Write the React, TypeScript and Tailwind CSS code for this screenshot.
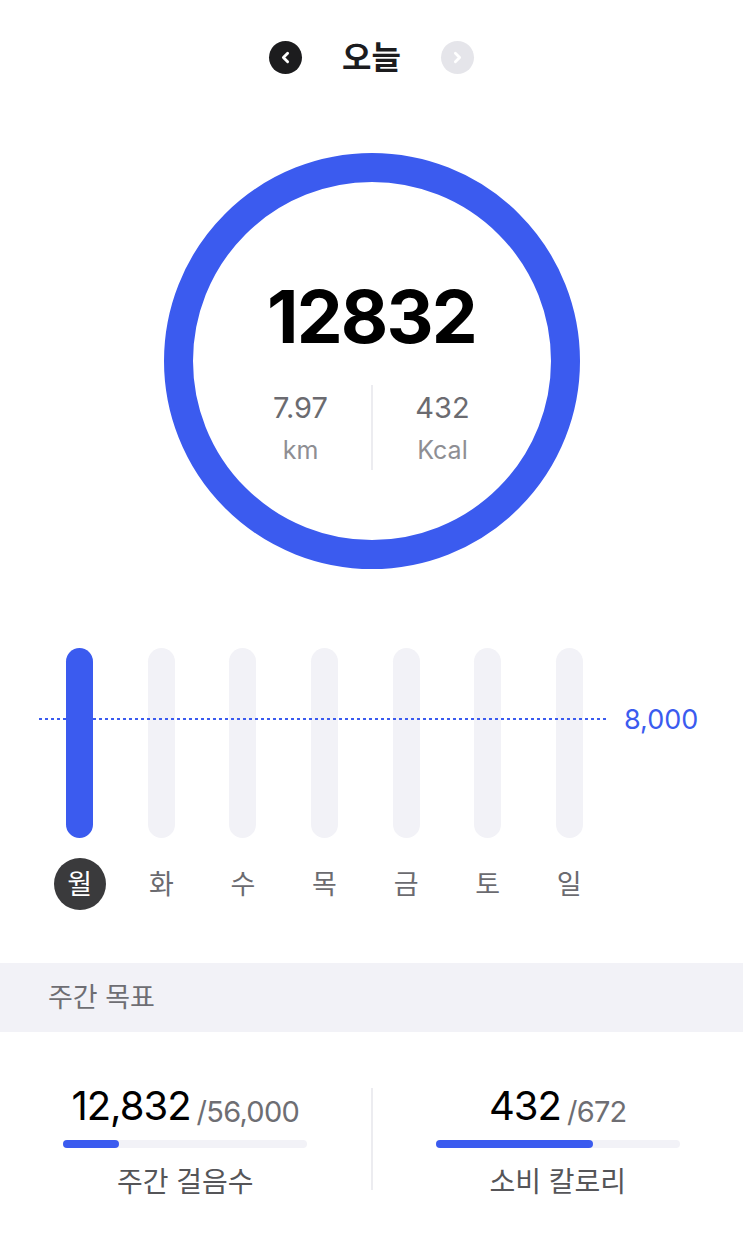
import { ChevronLeft, ChevronRight } from "lucide-react"

const BLUE = "#3b5bef"

const days = [
  { label: "월", value: 12832 },
  { label: "화", value: 0 },
  { label: "수", value: 0 },
  { label: "목", value: 0 },
  { label: "금", value: 0 },
  { label: "토", value: 0 },
  { label: "일", value: 0 },
]

function GoalItem({ value, total, label }: { value: number; total: number; label: string }) {
  const pct = Math.min(100, (value / total) * 100)
  return (
    <div className="flex flex-col items-center">
      <div className="flex items-end leading-none">
        <span className="text-[40px] leading-none text-black tracking-tight">{value.toLocaleString()}</span>
        <span className="ml-[6px] text-[29px] leading-none text-[#6e6e73] tracking-tight">/{total.toLocaleString()}</span>
      </div>
      <div className="mt-[14px] h-[8px] w-[244px] rounded-full bg-[#f2f2f7]">
        <div className="h-full rounded-full bg-[#3b5bef]" style={{ width: `${pct}%` }} />
      </div>
      <div className="mt-[20px] text-[28px] leading-none text-[#555558]">{label}</div>
    </div>
  )
}

export default function App() {
  return (
    <div
      className="flex w-[743px] flex-col bg-white"
      style={{ fontFamily: "Inter, 'Noto Sans CJK KR', sans-serif" }}
    >
      {/* 헤더 */}
      <div className="mt-[41px] flex h-[33px] items-center justify-center">
        <button className="flex h-[33px] w-[33px] items-center justify-center rounded-full bg-[#1c1c1e]">
          <ChevronLeft size={17} strokeWidth={4} color="#fff" />
        </button>
        <div className="mx-[40px] text-[32px] font-bold leading-none text-[#1c1c1e]">오늘</div>
        <button className="flex h-[33px] w-[33px] items-center justify-center rounded-full bg-[#e5e5ea]">
          <ChevronRight size={17} strokeWidth={4} color="#fff" />
        </button>
      </div>

      {/* 링 */}
      <div className="mt-[79px] flex justify-center">
        <div className="box-border flex h-[416px] w-[416px] flex-col items-center rounded-full border-[29px] border-[#3b5bef]">
          <div className="mt-[98px] text-[73px] font-bold leading-none tracking-tight text-black">12832</div>
          <div className="mt-[32px] flex h-[85px]">
            <div className="flex w-[140px] flex-col items-center">
              <div className="mt-[8px] text-[29px] leading-none text-[#6b6b70]">7.97</div>
              <div className="mt-[16px] text-[25px] leading-none text-[#8e8e93]">km</div>
            </div>
            <div className="w-[2px] bg-[#ececf0]" />
            <div className="flex w-[140px] flex-col items-center">
              <div className="mt-[8px] text-[29px] leading-none text-[#6b6b70]">432</div>
              <div className="mt-[16px] text-[25px] leading-none text-[#8e8e93]">Kcal</div>
            </div>
          </div>
        </div>
      </div>

      {/* 주간 차트 */}
      <div className="mt-[79px] flex pl-[39px]">
        <div className="relative w-[571px]">
          <div className="grid h-[190px] grid-cols-7">
            {days.map((d) => (
              <div key={d.label} className="flex justify-center">
                <div className={`relative h-full w-[27px] rounded-full ${d.value > 0 ? "z-10 bg-[#3b5bef]" : "bg-[#f2f2f7]"}`} />
              </div>
            ))}
          </div>
          <svg className="absolute left-0 top-[70px]" width="569" height="2">
            <line x1="0" y1="1" x2="569" y2="1" stroke={BLUE} strokeWidth="2" strokeDasharray="3 3" />
          </svg>
          <div className="mt-[20px] grid grid-cols-7">
            {days.map((d, i) => (
              <div key={d.label} className="flex justify-center">
                {i === 0 ? (
                  <div className="flex h-[52px] w-[52px] items-center justify-center rounded-full bg-[#3a3a3c] text-[27px] leading-none text-white">
                    {d.label}
                  </div>
                ) : (
                  <div className="flex h-[52px] items-center text-[27px] leading-none text-[#6b6b70]">{d.label}</div>
                )}
              </div>
            ))}
          </div>
        </div>
        <div className="ml-[14px] mt-[58px] text-[27px] leading-none text-[#3b5bef]">8,000</div>
      </div>

      {/* 주간 목표 */}
      <div className="mt-[53px] flex h-[69px] items-center bg-[#f2f2f7] pl-[48px]">
        <span className="text-[27px] leading-none text-[#6e6e73]">주간 목표</span>
      </div>

      <div className="mt-[54px] flex pb-[54px]">
        <div className="flex flex-1 justify-center">
          <GoalItem value={12832} total={56000} label="주간 걸음수" />
        </div>
        <div className="mt-[2px] h-[102px] w-[2px] bg-[#ececf0]" />
        <div className="flex flex-1 justify-center">
          <GoalItem value={432} total={672} label="소비 칼로리" />
        </div>
      </div>
    </div>
  )
}
